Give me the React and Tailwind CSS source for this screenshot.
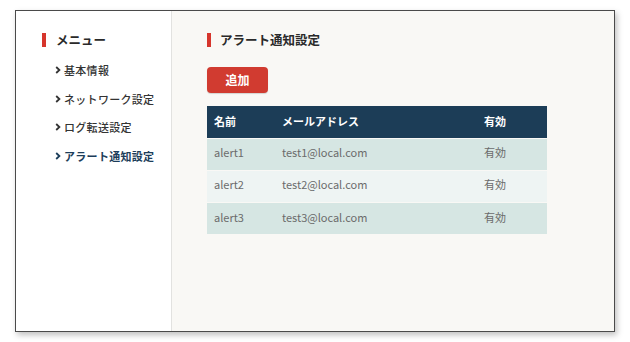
const menuItems = [
  { label: "基本情報" },
  { label: "ネットワーク設定" },
  { label: "ログ転送設定" },
  { label: "アラート通知設定", active: true },
]

const alerts = [
  { name: "alert1", email: "test1@local.com", status: "有効" },
  { name: "alert2", email: "test2@local.com", status: "有効" },
  { name: "alert3", email: "test3@local.com", status: "有効" },
]

function Chevron() {
  return (
    <svg width="6" height="8" viewBox="0 0 6 8" className="shrink-0">
      <path d="M1.2 1 L4.4 4 L1.2 7" fill="none" stroke="currentColor" strokeWidth="1.8" />
    </svg>
  )
}

export default function App() {
  return (
    <div
      className="w-[630px] h-[342px] bg-white pt-[10px] pl-[15px]"
      style={{ fontFamily: '"Noto Sans CJK JP", "Noto Sans", sans-serif' }}
    >
      <div className="flex w-[600px] h-[322px] border border-[#4a4a4a] shadow-[2px_3px_6px_rgba(0,0,0,0.25)]">
        <aside className="w-[156px] shrink-0 bg-white border-r border-[#e2e2e0] pt-[22px] pl-[26px]">
          <div className="flex items-center gap-[10px] h-[14px]">
            <span className="w-[4px] h-[14px] bg-[#d6352c]" />
            <span className="text-[12.5px] font-bold text-[#2a2a2a] leading-none">メニュー</span>
          </div>
          <ul className="mt-[9px] pl-[13px]">
            {menuItems.map((item) => (
              <li
                key={item.label}
                className={`flex items-center gap-[3px] h-[28.5px] text-[11px] tracking-[0.3px] ${
                  item.active ? "text-[#1c3d5a] font-bold" : "text-[#333] font-medium"
                }`}
              >
                <Chevron />
                <span>{item.label}</span>
              </li>
            ))}
          </ul>
        </aside>
        <main className="flex-1 bg-[#f9f8f5] pt-[22px] pl-[35px]">
          <div className="flex items-center gap-[9px] h-[14px]">
            <span className="w-[4px] h-[14px] bg-[#d6352c]" />
            <span className="text-[12.5px] font-bold text-[#2a2a2a] leading-none">アラート通知設定</span>
          </div>
          <button className="mt-[20px] w-[61px] h-[26px] rounded-[4px] bg-[#d13b30] text-white text-[12px] font-bold shadow-[0_1px_1px_rgba(0,0,0,0.15)]">
            追加
          </button>
          <table className="mt-[13px] w-[340px] border-collapse text-[11px]">
            <thead>
              <tr className="h-[32px] bg-[#1c3d57] text-white text-left">
                <th className="pl-[7px] pb-[2px] w-[75px] font-bold">名前</th>
                <th className="pl-0 pb-[2px] font-bold">メールアドレス</th>
                <th className="pl-0 pb-[2px] w-[63px] font-bold">有効</th>
              </tr>
            </thead>
            <tbody>
              {alerts.map((row, i) => (
                <tr
                  key={row.name}
                  className={`h-[32px] text-[#6b6b6b] border-t border-[#f9f8f5] ${
                    i % 2 === 1 ? "bg-[#eef4f3]" : "bg-[#d6e6e3]"
                  }`}
                >
                  <td className="pl-[7px] pb-[3px]">{row.name}</td>
                  <td className="pb-[3px]">{row.email}</td>
                  <td className="pb-[3px]">{row.status}</td>
                </tr>
              ))}
            </tbody>
          </table>
        </main>
      </div>
    </div>
  )
}
